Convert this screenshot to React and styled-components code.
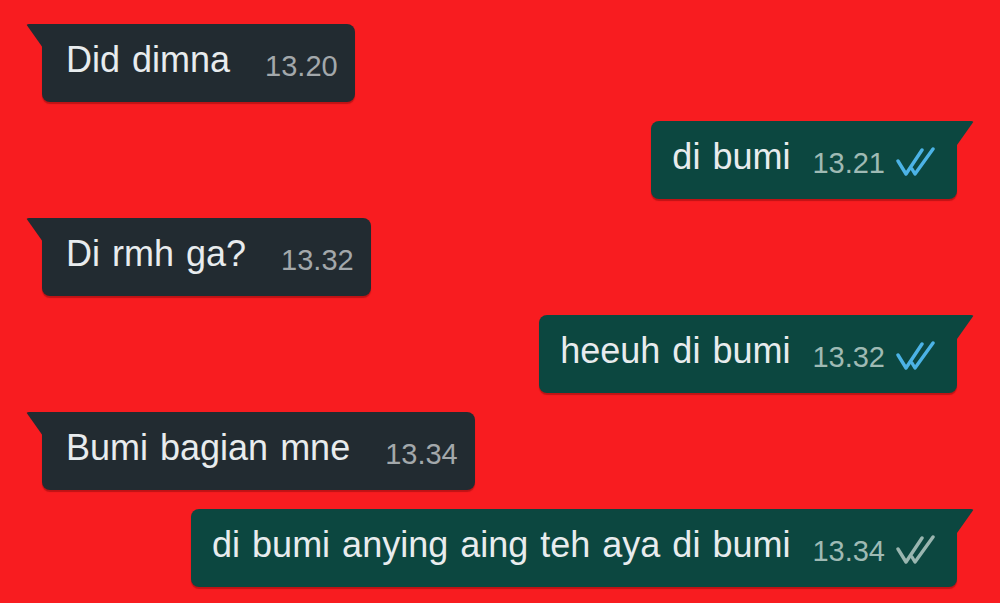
import styled, { createGlobalStyle } from "styled-components";

const GlobalStyle = createGlobalStyle`
  html, body {
    margin: 0;
    padding: 0;
    background: #f81c20;
  }
  body {
    font-family: "Liberation Sans", Arial, sans-serif;
  }
`;

const Chat = styled.div`
  width: 1000px;
  height: 603px;
  box-sizing: border-box;
  background: #f81c20;
  display: flex;
  flex-direction: column;
  gap: 19px;
  padding: 24px 43px 0 42px;
  overflow: hidden;
`;

const Bubble = styled.div`
  position: relative;
  align-self: ${({ $out }) => ($out ? "flex-end" : "flex-start")};
  display: flex;
  align-items: flex-end;
  box-sizing: border-box;
  height: 78px;
  padding: ${({ $out }) => ($out ? "18px 21px 24px 21px" : "18px 17px 24px 24px")};
  background: ${({ $out }) => ($out ? "#0c4740" : "#222b31")};
  border-radius: ${({ $out }) => ($out ? "8px 0 8px 8px" : "0 8px 8px 8px")};
  box-shadow: 0 2px 1px rgba(90, 0, 0, 0.35);

  &::before {
    content: "";
    position: absolute;
    top: 0;
    ${({ $out }) => ($out ? "right: -17px;" : "left: -16px;")}
    width: 17px;
    height: 24px;
    background: inherit;
    clip-path: ${({ $out }) =>
      $out
        ? "polygon(0 0, 100% 0, 0 100%)"
        : "polygon(0 0, 100% 0, 100% 100%)"};
    border-radius: ${({ $out }) => ($out ? "0 3px 0 0" : "3px 0 0 0")};
  }
`;

const Text = styled.span`
  font-size: 36px;
  line-height: 1;
  word-spacing: 2px;
  color: #e8ecee;
  white-space: nowrap;
`;

const Meta = styled.span`
  display: flex;
  align-items: flex-end;
  gap: 11px;
  margin-left: ${({ $out }) => ($out ? "22px" : "35px")};
  margin-bottom: -3px;
`;

const Time = styled.span`
  font-size: 29px;
  line-height: 1;
  color: ${({ $out }) => ($out ? "#9fbab4" : "#a3a8ab")};
`;

const Ticks = styled.svg`
  width: 40px;
  height: 30px;
  margin-bottom: 1px;
  color: ${({ $read }) => ($read ? "#4cb3e6" : "#9ab6b0")};
`;

function DoubleCheck({ read }) {
  return (
    <Ticks $read={read} viewBox="0 0 40 30" fill="none">
      <path
        d="M2 14 L10 27 L26 3"
        stroke="currentColor"
        strokeWidth="3.4"
        strokeLinecap="round"
        strokeLinejoin="round"
      />
      <path
        d="M16 22 L19 27 L37 2"
        stroke="currentColor"
        strokeWidth="3.4"
        strokeLinecap="round"
        strokeLinejoin="round"
      />
    </Ticks>
  );
}

const messages = [
  { text: "Did dimna", time: "13.20", out: false },
  { text: "di bumi", time: "13.21", out: true, read: true },
  { text: "Di rmh ga?", time: "13.32", out: false },
  { text: "heeuh di bumi", time: "13.32", out: true, read: true },
  { text: "Bumi bagian mne", time: "13.34", out: false },
  { text: "di bumi anying aing teh aya di bumi", time: "13.34", out: true, read: false },
];

export default function App() {
  return (
    <>
      <GlobalStyle />
      <Chat>
        {messages.map((m, i) => (
          <Bubble key={i} $out={m.out}>
            <Text>{m.text}</Text>
            <Meta $out={m.out}>
              <Time $out={m.out}>{m.time}</Time>
              {m.out && <DoubleCheck read={m.read} />}
            </Meta>
          </Bubble>
        ))}
      </Chat>
    </>
  );
}
